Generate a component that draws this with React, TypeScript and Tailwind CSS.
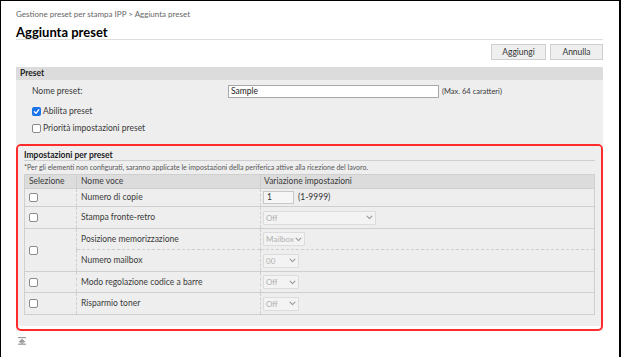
import React from 'react'

const font = { fontFamily: 'Lato, "Noto Sans", sans-serif' }

const Box = ({ checked = false }: { checked?: boolean }) =>
  checked ? (
    <span className="inline-flex items-center justify-center w-[9px] h-[9px] rounded-[2px] bg-[#1a73e8]">
      <svg width="7" height="7" viewBox="0 0 10 10" fill="none" stroke="white" strokeWidth="2" strokeLinecap="round" strokeLinejoin="round">
        <polyline points="2 5.5 4.2 7.6 8.2 2.6" />
      </svg>
    </span>
  ) : (
    <span className="inline-block w-[9px] h-[9px] rounded-[2px] bg-white border border-[#8a8a8a]" />
  )

const Chevron = () => (
  <svg width="7" height="5" viewBox="0 0 10 6" fill="none" stroke="#9a9a9a" strokeWidth="1.6" strokeLinecap="round" strokeLinejoin="round">
    <polyline points="1.5 1 5 4.5 8.5 1" />
  </svg>
)

function Select({ value, width }: { value: string; width: string }) {
  return (
    <div className={`flex items-center justify-between gap-[1px] h-[14px] px-[2px] border border-[#dcdcdc] bg-[#f3f3f3] rounded-[1px] text-[8px] text-[#b0b0b0] ${width}`}>
      <span>{value}</span>
      <Chevron />
    </div>
  )
}

const rows: { name: string; ctl: React.ReactNode; h: string }[] = [
  {
    name: 'Numero di copie',
    h: 'h-[18px]',
    ctl: (
      <div className="flex items-center gap-[4px]">
        <div className="w-[31px] h-[13px] border border-[#c8c8c8] bg-[#f6f6f6] px-[3px] text-[8.5px] text-[#333] leading-[11px]">1</div>
        <span className="text-[8.5px] text-[#333]">(1-9999)</span>
      </div>
    ),
  },
  { name: 'Stampa fronte-retro', h: 'h-[22px]', ctl: <Select value="Off" width="w-[113px]" /> },
]

export default function App() {
  return (
    <div className="w-[621px] h-[357px] bg-white overflow-hidden border-l border-t border-r-[2px] border-black text-[#3a3a3a]" style={font}>
      <div className="pl-[15px] pr-[16px]">
        <div className="pt-[7px] text-[8px] text-[#666] leading-[12px]">Gestione preset per stampa IPP &gt; Aggiunta preset</div>
        <h1 className="mt-[5px] text-[13px] font-bold text-black leading-[14px] border-b border-[#dedede]">Aggiunta preset</h1>

        <div className="flex justify-end gap-[4px] mt-[4px]">
          <button className="w-[55px] h-[16px] bg-[#efefef] border border-[#cfcfcf] text-[8.5px] text-[#333]">Aggiungi</button>
          <button className="w-[53px] h-[16px] bg-[#efefef] border border-[#cfcfcf] text-[8.5px] text-[#333]">Annulla</button>
        </div>

        {/* Preset panel */}
        <div className="mt-[7px] bg-[#eeeeee]">
          <div className="h-[13px] bg-[#dcdcdc] px-[4px] text-[8.5px] font-bold text-[#222] leading-[13px]">Preset</div>
          <div className="pl-[16px] pt-[5px]">
            <div className="flex items-center h-[13px] text-[8.5px]">
              <span className="w-[196px]">Nome preset:</span>
              <div className="w-[211px] h-[13px] bg-white border border-[#a8a8a8] px-[2px] leading-[11px] text-[#222]">Sample</div>
              <span className="ml-[3px] text-[7.5px]">(Max. 64 caratteri)</span>
            </div>
            <label className="flex items-center gap-[2px] mt-[7px] h-[12px] text-[8.5px]">
              <Box checked /> Abilita preset
            </label>
            <label className="flex items-center gap-[2px] mt-[5px] h-[12px] text-[8.5px]">
              <Box /> Priorità impostazioni preset
            </label>
          </div>

          {/* Impostazioni per preset */}
          <div className="mt-[10px] bg-white border-2 border-[#ff2a2a] rounded-[5px] overflow-hidden">
            <div className="bg-[#eeeeee] px-[6px] pt-[4px] pb-[11px] mb-[3px]">
              <div className="text-[8.5px] font-bold text-[#222] leading-[10px] border-b border-[#cfcfcf]">Impostazioni per preset</div>
              <div className="mt-[1px] text-[7px] text-[#555] leading-[10px]">
                *Per gli elementi non configurati, saranno applicate le impostazioni della periferica attive alla ricezione del lavoro.
              </div>
              <table className="mt-[2px] w-full border-collapse border border-[#cfcfcf] text-[8.5px]">
                <thead>
                  <tr className="h-[14px] bg-[#dcdcdc] text-left">
                    <th className="w-[52px] px-[4px] font-normal">Selezione</th>
                    <th className="w-[184px] px-[4px] font-normal border-l border-[#cfcfcf]">Nome voce</th>
                    <th className="px-[3px] font-normal border-l border-[#cfcfcf]">Variazione impostazioni</th>
                  </tr>
                </thead>
                <tbody>
                  {rows.map(r => (
                    <tr key={r.name} className={`${r.h} border-t border-[#cfcfcf]`}>
                      <td className="px-[4px] align-middle"><div className="flex"><Box /></div></td>
                      <td className="px-[4px] border-l border-dashed border-[#cfcfcf]">{r.name}</td>
                      <td className="px-[2px] border-l border-dashed border-[#cfcfcf]">{r.ctl}</td>
                    </tr>
                  ))}
                  <tr className="h-[21px] border-t border-[#cfcfcf]">
                    <td rowSpan={2} className="px-[4px] align-middle"><div className="flex"><Box /></div></td>
                    <td className="px-[4px] border-l border-dashed border-[#cfcfcf]">Posizione memorizzazione</td>
                    <td className="px-[2px] border-l border-dashed border-[#cfcfcf]"><Select value="Mailbox" width="w-[42px]" /></td>
                  </tr>
                  <tr className="h-[22px] border-t border-dashed border-[#cfcfcf]">
                    <td className="px-[4px] border-l border-dashed border-[#cfcfcf]">Numero mailbox</td>
                    <td className="px-[2px] border-l border-dashed border-[#cfcfcf]"><Select value="00" width="w-[36px]" /></td>
                  </tr>
                  <tr className="h-[21px] border-t border-[#cfcfcf]">
                    <td className="px-[4px]"><div className="flex"><Box /></div></td>
                    <td className="px-[4px] border-l border-dashed border-[#cfcfcf]">Modo regolazione codice a barre</td>
                    <td className="px-[2px] border-l border-dashed border-[#cfcfcf]"><Select value="Off" width="w-[36px]" /></td>
                  </tr>
                  <tr className="h-[22px] border-t border-[#cfcfcf]">
                    <td className="px-[4px]"><div className="flex"><Box /></div></td>
                    <td className="px-[4px] border-l border-dashed border-[#cfcfcf]">Risparmio toner</td>
                    <td className="px-[2px] border-l border-dashed border-[#cfcfcf]"><Select value="Off" width="w-[36px]" /></td>
                  </tr>
                </tbody>
              </table>
            </div>
          </div>
        </div>

        <div className="mt-[6px] pl-[2px]">
          <svg width="8" height="8" viewBox="0 0 8 8" fill="#9a9a9a">
            <rect x="0" y="0" width="8" height="1.2" />
            <polygon points="4,1.8 7.5,5 0.5,5" />
            <rect x="0" y="6.6" width="8" height="1.2" />
            <polygon points="4,7 7,5.2 1,5.2" />
          </svg>
        </div>
      </div>
    </div>
  )
}
